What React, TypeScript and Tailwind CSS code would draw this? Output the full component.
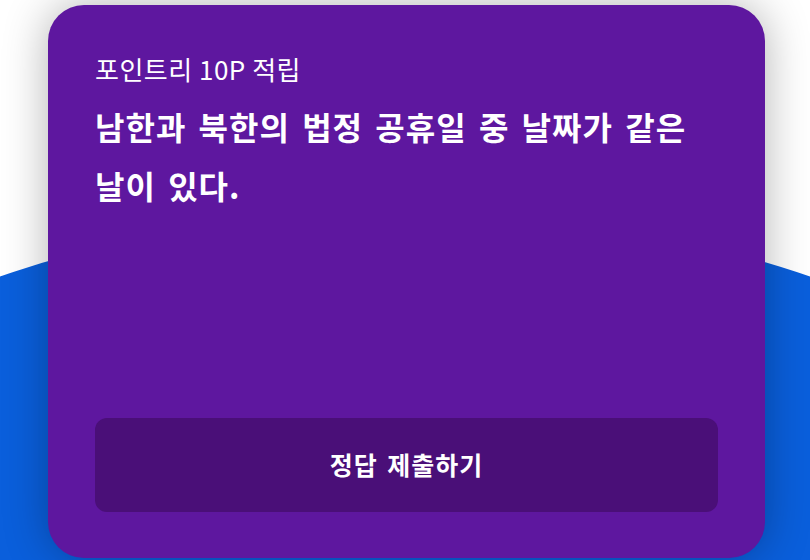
export default function App() {
  return (
    <div
      className="relative h-[560px] w-[810px] overflow-hidden bg-white"
      style={{ fontFamily: '"Noto Sans CJK KR", "Noto Sans", sans-serif' }}
    >
      {/* blue backdrop arc */}
      <div className="absolute left-[-300px] top-[213px] h-[700px] w-[1410px] rounded-[50%] bg-[#0a5fdc]" />

      <div className="relative ml-[48px] mt-[5px] flex h-[553px] w-[717px] flex-col rounded-[36px] bg-[#5e179f] px-[47px] pb-[46px] pt-[47px] shadow-[0_0_45px_rgba(0,0,0,0.3)]">
        <p className="text-[26px] leading-[33px] tracking-[0.5px] text-white">포인트리 10P 적립</p>
        <h1 className="mt-[12px] break-keep text-[32px] font-bold leading-[59px] tracking-[1px] text-white [word-spacing:4px]">
          남한과 북한의 법정 공휴일 중 날짜가 같은 날이 있다.
        </h1>
        <div className="flex-1" />
        <button className="h-[94px] w-full rounded-[12px] bg-[#4a0f78] text-[25px] font-bold tracking-[1px] text-white [word-spacing:3px]">
          정답 제출하기
        </button>
      </div>
    </div>
  );
}
